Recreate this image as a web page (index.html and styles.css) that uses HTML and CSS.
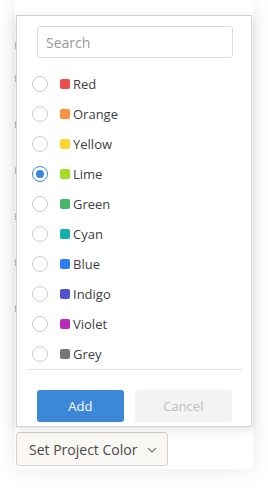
FILE: index.html
```html
<!DOCTYPE html>
<html lang="en">

<head>
    <meta charset="UTF-8">
    <meta name="viewport" content="width=device-width, initial-scale=1.0">
    <title>Set Project Color</title>
    <link rel="stylesheet" href="styles.css">
</head>

<body>
    <div class="sheet">
        <div class="handles">
            <span class="handle handle-first"></span>
            <span class="handle"></span>
            <span class="handle"></span>
            <span class="handle"></span>
            <span class="handle"></span>
            <span class="handle"></span>
            <span class="handle"></span>
        </div>

        <button class="trigger">
            Set Project Color
            <svg class="chevron" width="10" height="6" viewBox="0 0 10 6">
                <path d="M1 1l4 4 4-4" fill="none" stroke="#777" stroke-width="1.2" />
            </svg>
        </button>

        <div class="popup">
            <input class="search" type="text" placeholder="Search">

            <ul class="color-list">
                <li class="color-row"><span class="radio"></span><span class="swatch" style="background: #ec4f4c;"></span>Red</li>
                <li class="color-row"><span class="radio"></span><span class="swatch" style="background: #f8923f;"></span>Orange</li>
                <li class="color-row"><span class="radio"></span><span class="swatch" style="background: #fcd533;"></span>Yellow</li>
                <li class="color-row"><span class="radio radio-checked"></span><span class="swatch" style="background: #a5dc26;"></span>Lime</li>
                <li class="color-row"><span class="radio"></span><span class="swatch" style="background: #45b868;"></span>Green</li>
                <li class="color-row"><span class="radio"></span><span class="swatch" style="background: #12afad;"></span>Cyan</li>
                <li class="color-row"><span class="radio"></span><span class="swatch" style="background: #2a7ff6;"></span>Blue</li>
                <li class="color-row"><span class="radio"></span><span class="swatch" style="background: #5353d0;"></span>Indigo</li>
                <li class="color-row"><span class="radio"></span><span class="swatch" style="background: #b82cb9;"></span>Violet</li>
                <li class="color-row"><span class="radio"></span><span class="swatch" style="background: #767676;"></span>Grey</li>
            </ul>

            <div class="actions">
                <button class="btn btn-add">Add</button>
                <button class="btn btn-cancel">Cancel</button>
            </div>
        </div>
    </div>
</body>

</html>
```

FILE: styles.css
```css
:root {
    --blue: #3d87d7;
    --text: #404040;
    --border: #dcdcdc;
}

* {
    margin: 0;
    padding: 0;
    box-sizing: border-box;
}

body {
    font-family: 'Open Sans', 'Noto Sans', Arial, sans-serif;
    color: var(--text);
    background-color: #ffffff;
    width: 268px;
    height: 491px;
    overflow: hidden;
}

.sheet {
    position: relative;
    margin-left: 15px;
    width: 238px;
    height: 469px;
    padding-bottom: 3px;
    background-color: #ffffff;
    box-shadow: 0 0 22px rgba(0, 0, 0, 0.09);
    display: flex;
    flex-direction: column;
}

/* drag handles peeking out behind the popup */
.handles {
    display: flex;
    flex-direction: column;
    gap: 39px;
    padding-top: 42px;
}

.handle {
    display: block;
    width: 2px;
    height: 7px;
    background-image: radial-gradient(circle, #8a8a8a 0.8px, transparent 1px);
    background-size: 2px 2.4px;
}

.handle-first {
    margin-bottom: -13px;
}

.trigger {
    margin-top: auto;
    margin-left: 1px;
    width: 152px;
    height: 34px;
    display: flex;
    align-items: center;
    justify-content: space-between;
    padding: 0 10px 0 12px;
    font-family: inherit;
    font-size: 14px;
    color: #4a4a4a;
    background-color: #f9f8f4;
    border: 1px solid #d5d3ce;
    border-radius: 3px;
}

.chevron {
    margin-top: 2px;
}

/* Popup */
.popup {
    position: absolute;
    left: 1px;
    top: 15px;
    width: 236px;
    height: 412px;
    background-color: #ffffff;
    border: 1px solid #d3d3d3;
    box-shadow: 0 2px 10px rgba(0, 0, 0, 0.12);
    display: flex;
    flex-direction: column;
    padding: 10px 19px 0 10px;
}

.search {
    margin-left: 10px;
    width: 196px;
    height: 32px;
    padding: 0 8px;
    font-family: inherit;
    font-size: 14px;
    color: var(--text);
    border: 1px solid var(--border);
    border-radius: 3px;
    outline: none;
}

.search::placeholder {
    color: #9a9a9a;
}

.color-list {
    list-style: none;
    margin-top: 11px;
    width: 215px;
    border-bottom: 1px solid #e2e2e2;
}

.color-row {
    display: flex;
    align-items: center;
    height: 30px;
    padding-left: 5px;
    font-size: 13px;
}

.radio {
    width: 16px;
    height: 16px;
    border: 1px solid #cccccc;
    border-radius: 50%;
    margin-right: 12px;
    display: flex;
    align-items: center;
    justify-content: center;
}

.radio-checked {
    border-color: var(--blue);
}

.radio-checked::after {
    content: '';
    width: 8px;
    height: 8px;
    border-radius: 50%;
    background-color: var(--blue);
}

.swatch {
    width: 10px;
    height: 10px;
    border-radius: 2px;
    margin-right: 3px;
}

.actions {
    display: flex;
    gap: 11px;
    margin-top: 20px;
    padding-left: 10px;
}

.btn {
    height: 32px;
    font-family: inherit;
    font-size: 13px;
    border: none;
    border-radius: 3px;
}

.btn-add {
    width: 89px;
    color: #ffffff;
    background-color: var(--blue);
}

.btn-cancel {
    width: 100px;
    color: #bdbdbd;
    background-color: #f3f3f3;
}
```
